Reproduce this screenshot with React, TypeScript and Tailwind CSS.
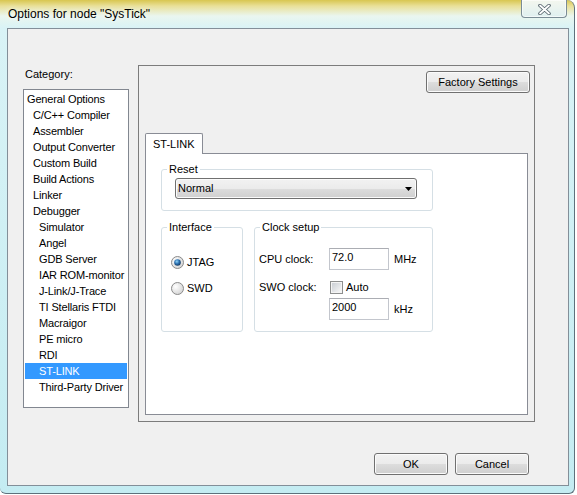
const btnFace =
  "rounded-[3px] border border-[#707070] bg-[linear-gradient(180deg,#f2f2f2_0%,#ebebeb_50%,#dddddd_50%,#cfcfcf_100%)] shadow-[inset_0_0_0_1px_#fbfbfb]";
const btn = "flex items-center justify-center " + btnFace;

const categories: { label: string; level: number; selected?: boolean }[] = [
  { label: "General Options", level: 0 },
  { label: "C/C++ Compiler", level: 1 },
  { label: "Assembler", level: 1 },
  { label: "Output Converter", level: 1 },
  { label: "Custom Build", level: 1 },
  { label: "Build Actions", level: 1 },
  { label: "Linker", level: 1 },
  { label: "Debugger", level: 1 },
  { label: "Simulator", level: 2 },
  { label: "Angel", level: 2 },
  { label: "GDB Server", level: 2 },
  { label: "IAR ROM-monitor", level: 2 },
  { label: "J-Link/J-Trace", level: 2 },
  { label: "TI Stellaris FTDI", level: 2 },
  { label: "Macraigor", level: 2 },
  { label: "PE micro", level: 2 },
  { label: "RDI", level: 2 },
  { label: "ST-LINK", level: 2, selected: true },
  { label: "Third-Party Driver", level: 2 },
];

function Radio({ id, checked }: { id: string; checked?: boolean }) {
  return (
    <svg width="13" height="13" viewBox="0 0 13 13">
      <defs>
        <radialGradient id={`bg-${id}`} cx="35%" cy="35%" r="70%">
          <stop offset="0%" stopColor="#ffffff" />
          <stop offset="100%" stopColor="#d4d4d4" />
        </radialGradient>
        <radialGradient id={`dot-${id}`} cx="40%" cy="35%" r="65%">
          <stop offset="0%" stopColor="#8fd3f7" />
          <stop offset="55%" stopColor="#2a6fb0" />
          <stop offset="100%" stopColor="#173c63" />
        </radialGradient>
      </defs>
      <circle cx="6.5" cy="6.5" r="6" fill={`url(#bg-${id})`} stroke="#8a8a8a" />
      {checked && <circle cx="6.5" cy="6.5" r="3.3" fill={`url(#dot-${id})`} />}
    </svg>
  );
}

function TextBox({ value }: { value: string }) {
  return (
    <div className="w-[60px] h-[22px] border border-[#c3c6cd] border-t-[#abadb3] bg-white pl-[2px] pt-[2px] leading-[13px]">
      {value}
    </div>
  );
}

export default function App() {
  return (
    <div className="w-[577px] h-[495px] bg-white font-['Liberation_Sans',Arial,sans-serif] text-[11px] text-black">
      <div className="w-[575px] h-[494px] flex flex-col rounded-tr-[8px] rounded-b-[6px] border-r border-b border-[#5d717c] bg-[linear-gradient(180deg,#d8c650_0px,#e9e098_6px,#eaf6ef_16px,#d9f3f6_28px,#c4ecf2_100%)]">
        {/* title bar */}
        <div className="h-[28px] flex items-start shrink-0">
          <div className="self-center pl-[8px] text-[12px] leading-[14px] [text-shadow:0_0_6px_#ffffff]">
            Options for node "SysTick"
          </div>
          <div className="ml-auto mr-[7px] w-[46px] h-[18px] flex items-center justify-center rounded-b-[4px] border border-t-0 border-[#7a8c96] bg-[linear-gradient(180deg,#f4f7ee,#dfeff0)] shadow-[inset_0_0_0_1px_rgba(255,255,255,0.6)]">
            <svg width="13" height="11" viewBox="0 0 13 11" className="mt-[2px]">
              <path d="M2 1.5 L11 9.5 M11 1.5 L2 9.5" stroke="#56636c" strokeWidth="3.6" strokeLinecap="round" />
              <path d="M2 1.5 L11 9.5 M11 1.5 L2 9.5" stroke="#ffffff" strokeWidth="1.8" strokeLinecap="round" />
            </svg>
          </div>
        </div>

        {/* client area */}
        <div className="ml-[7px] w-[562px] h-[458px] border border-[#838f99] bg-[#f0f0f0] flex flex-col">
          <div className="flex pt-[36px] pl-[15px]">
            <div className="w-[106px] flex flex-col mt-[3px]">
              <div className="h-[13px] leading-[13px] pl-[2px]">Category:</div>
              <div className="mt-[8px] h-[319px] border border-[#828790] bg-white pt-[1px] tracking-[-0.15px]">
                {categories.map((c) => (
                  <div
                    key={c.label}
                    className={
                      "mx-[1px] h-[16px] leading-[16px] whitespace-nowrap " +
                      (c.level === 0 ? "pl-[2px] " : c.level === 1 ? "pl-[8px] " : "pl-[14px] ") +
                      (c.selected ? "bg-[#3399ff] text-white" : "")
                    }
                  >
                    {c.label}
                  </div>
                ))}
              </div>
            </div>

            <div className="ml-[9px] w-[397px] h-[357px] border border-[#7c7c7c] flex flex-col">
              <div className="flex justify-end pt-[5px] pr-[4px]">
                <div className={btn + " w-[104px] h-[22px]"}>Factory Settings</div>
              </div>

              <div className="mt-[40px] pl-[6px] flex flex-col">
                <div className="relative z-10 -mb-[1px] w-[58px] h-[21px] border border-b-0 border-[#898c95] rounded-t-[2px] bg-white pl-[7px] leading-[20px]">
                  ST-LINK
                </div>
                <div className="w-[383px] h-[262px] border border-[#898c95] bg-white">
                  <fieldset className="ml-[15px] mt-[9px] w-[272px] border border-[#d5dfe5] rounded-[3px] pb-[11px]">
                    <legend className="ml-[5px] px-[2px] leading-[13px]">Reset</legend>
                    <div className={btnFace + " mt-[2px] ml-[13px] w-[242px] h-[21px] flex items-center justify-between pl-[2px] pr-[4px]"}>
                      <span>Normal</span>
                      <svg width="7" height="4" viewBox="0 0 7 4">
                        <polygon points="0,0 7,0 3.5,4" fill="#000000" />
                      </svg>
                    </div>
                  </fieldset>

                  <div className="ml-[15px] mt-[10px] flex gap-[11px]">
                    <fieldset className="w-[82px] h-[111px] border border-[#d5dfe5] rounded-[3px]">
                      <legend className="ml-[5px] px-[2px] leading-[13px]">Interface</legend>
                      <div className="mt-[20px] pl-[9px] flex flex-col gap-[10px]">
                        <div className="h-[16px] flex items-center gap-[3px]">
                          <Radio id="jtag" checked />
                          <span>JTAG</span>
                        </div>
                        <div className="h-[16px] flex items-center gap-[3px]">
                          <Radio id="swd" />
                          <span>SWD</span>
                        </div>
                      </div>
                    </fieldset>

                    <fieldset className="w-[179px] h-[111px] border border-[#d5dfe5] rounded-[3px]">
                      <legend className="ml-[5px] px-[2px] leading-[13px]">Clock setup</legend>
                      <div className="mt-[14px] pl-[4px] flex flex-col">
                        <div className="h-[22px] flex items-center">
                          <span className="w-[70px]">CPU clock:</span>
                          <TextBox value="72.0" />
                          <span className="pl-[5px]">MHz</span>
                        </div>
                        <div className="mt-[6px] h-[22px] flex items-center">
                          <span className="w-[70px]">SWO clock:</span>
                          <div className="ml-[1px] w-[13px] h-[13px] border border-[#8e8f8f] bg-[#f4f4f4] p-[1px]">
                            <div className="w-full h-full bg-[linear-gradient(135deg,#cbcfd5,#f7f7f7)]" />
                          </div>
                          <span className="ml-[3px]">Auto</span>
                        </div>
                        <div className="h-[22px] flex items-center">
                          <span className="w-[70px]" />
                          <TextBox value="2000" />
                          <span className="pl-[5px]">kHz</span>
                        </div>
                      </div>
                    </fieldset>
                  </div>
                </div>
              </div>
            </div>
          </div>

          <div className="mt-[31px] flex justify-end gap-[7px] pr-[39px]">
            <div className={btn + " w-[74px] h-[22px]"}>OK</div>
            <div className={btn + " w-[74px] h-[22px]"}>Cancel</div>
          </div>
        </div>
      </div>
    </div>
  );
}
